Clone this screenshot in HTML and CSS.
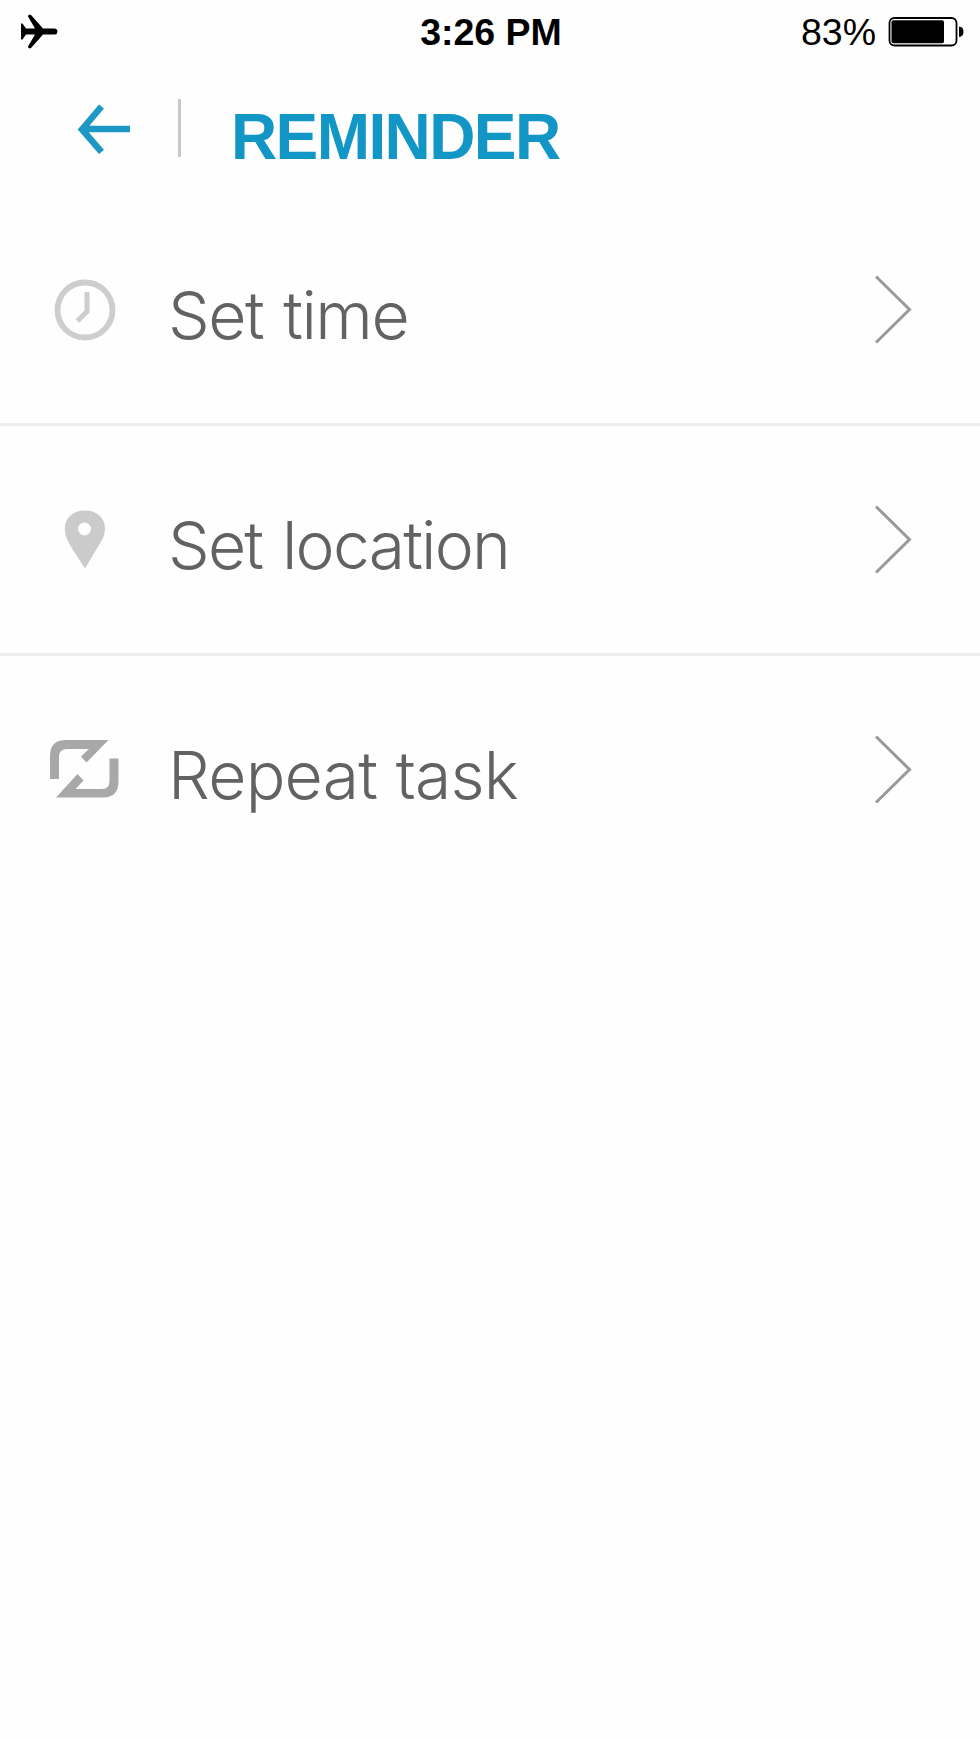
FILE: index.html
```html
<!DOCTYPE html>
<html lang="en">
<head>
  <meta charset="UTF-8">
  <meta name="viewport" content="width=device-width, initial-scale=1.0">
  <title>Reminder</title>
  <link rel="stylesheet" href="styles.css">
</head>
<body>

  <!-- Status bar -->
  <div class="status-bar">
    <div class="status-left">
      <svg class="plane" width="38" height="36" viewBox="0 0 38 36">
        <path d="M1 9.5 L2.5 9.5 L6 14.5 L15 14.5 L8 2.5 Q8 0.5 10 0.5 L11.5 1.5 L23 14.5 L35 14.5 Q37.5 15 37.5 17.5 Q37.5 20 35 20.5 L23 20.5 L11.5 33.5 L10 34.5 Q8 34.5 8 32.5 L15 20.5 L6 20.5 L2.5 25.5 L1 25.5 Z"/>
      </svg>
    </div>
    <div class="status-time">3:26 PM</div>
    <div class="status-right">
      <span class="percent">83%</span>
      <svg width="76" height="30" viewBox="0 0 76 30">
        <rect x="1.5" y="1" width="67" height="27.5" rx="5" fill="#fff" stroke="#000" stroke-width="1.8"/>
        <rect x="3.5" y="3.3" width="52.5" height="23" rx="2"/>
        <path d="M71 9.5 Q75.5 10 75.5 14.75 Q75.5 19.5 71 20 Z"/>
      </svg>
    </div>
  </div>

  <!-- Header -->
  <div class="header">
    <svg class="back" width="54" height="50" viewBox="0 0 54 50">
      <path d="M24.5 2.5 L5 25.5 L24.5 48 M5 25 H53"/>
    </svg>
    <div class="separator"></div>
    <h1 class="title">REMINDER</h1>
  </div>

  <!-- Options -->
  <ul class="options">
    <li class="option">
      <div class="icon">
        <svg width="62" height="62" viewBox="0 0 62 62" fill="none" stroke="#cdcdcd">
          <circle cx="31" cy="31" r="27.5" stroke-width="5.8"/>
          <path d="M33 13 V32.5 L23.5 42" stroke-width="5"/>
        </svg>
      </div>
      <span class="label time">Set time</span>
      <svg class="chevron" width="40" height="70" viewBox="0 0 40 70">
        <path d="M1 1.5 L34.5 34.5 L1 67.5"/>
      </svg>
    </li>
    <li class="option">
      <div class="icon">
        <svg width="42" height="60" viewBox="0 0 42 60" fill="#cbcbcb">
          <path fill-rule="evenodd" d="M21 0.5 C9 0.5 0.8 8 0.8 18.5 C0.8 27 5 33 9 40 L21 58.5 L32 40 C36 33 41 27 41 18.5 C41 8 33 0.5 21 0.5 Z M20.5 12.5 A6.5 6.5 0 1 1 20.5 25.5 A6.5 6.5 0 1 1 20.5 12.5 Z"/>
        </svg>
      </div>
      <span class="label location">Set location</span>
      <svg class="chevron" width="40" height="70" viewBox="0 0 40 70">
        <path d="M1 1.5 L34.5 34.5 L1 67.5"/>
      </svg>
    </li>
    <li class="option">
      <div class="icon repeat-icon">
        <svg width="70" height="60" viewBox="0 0 70 60" fill="#a8a8a8">
          <path d="M1 40 V17 Q1 1 17 1 H59.5 L37.5 23.5 L32 17.5 L40 10 H18 Q10 10 10 18 V40 Z"/>
          <path d="M69.5 19.5 V42.5 Q69.5 58.5 53.5 58.5 H7 L28.5 35 L34.5 41.5 L26.5 50 H53 Q60.5 50 60.5 42 V19.5 Z"/>
        </svg>
      </div>
      <span class="label repeat">Repeat task</span>
      <svg class="chevron" width="40" height="70" viewBox="0 0 40 70">
        <path d="M1 1.5 L34.5 34.5 L1 67.5"/>
      </svg>
    </li>
  </ul>

</body>
</html>
```
FILE: styles.css
```css
* {
  box-sizing: border-box;
}
body {
  margin: 0;
  background-color: #fefefe;
  font-family: "Liberation Sans", Arial, sans-serif;
}

/* Status bar */
.status-bar {
  display: grid;
  grid-template-columns: 1fr auto 1fr;
  align-items: center;
  height: 64px;
  padding: 0 16px 0 18px;
  color: #000;
  font-size: 37.5px;
}
.status-left,
.status-right {
  display: flex;
  align-items: center;
}
.plane {
  margin: 0 0 1px 1.5px;
}
.status-time {
  padding-top: 1px;
  font-weight: bold;
}
.status-right {
  justify-content: flex-end;
  gap: 12px;
}
.percent {
  padding-top: 1px;
}

/* Header */
.header {
  display: flex;
  align-items: center;
  height: 132px;
  padding: 0 0 3px 77px;
}
.back {
  fill: none;
  stroke: #1d97c4;
  stroke-width: 6.5;
}
.separator {
  width: 3px;
  height: 58px;
  margin: 0 50px 2px 47px;
  background-color: #c8c8c8;
}
.title {
  margin: 0;
  padding-top: 16px;
  color: #1296c6;
  font-size: 64px;
  letter-spacing: -1.6px;
  line-height: 70px;
}

/* Options */
.options {
  margin: 0;
  padding: 0;
  list-style: none;
}
.option {
  display: flex;
  align-items: center;
  height: 230px;
  padding: 0 65px 0 35px;
  border-bottom: 3px solid #eeeeee;
}
.option:last-child {
  border-bottom-color: transparent;
}
.icon {
  display: flex;
  justify-content: center;
  width: 100px;
}
.repeat-icon {
  padding: 0 3px 1px 0;
}
.label {
  flex: 1;
  padding: 11px 0 0 33px;
  color: #626262;
  font-family: Inter, "Liberation Sans", sans-serif;
  font-size: 66px;
  font-weight: 300;
}
.time {
  letter-spacing: -1.5px;
  word-spacing: 3px;
}
.location {
  letter-spacing: -1.8px;
  word-spacing: 3px;
}
.repeat {
  letter-spacing: -0.8px;
  word-spacing: 1px;
}
.chevron {
  fill: none;
  stroke: #999;
  stroke-width: 3;
}
```
